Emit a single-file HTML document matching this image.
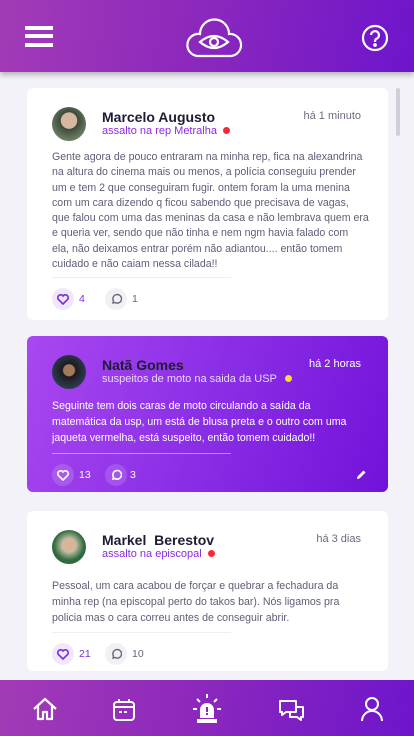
<!DOCTYPE html>
<html><head><meta charset="utf-8"><style>
*{margin:0;padding:0;box-sizing:border-box}
body{width:414px;height:736px;overflow:hidden;background:#f2f2f8;font-family:"Liberation Sans",sans-serif;position:relative}
.hdr{position:absolute;left:0;top:0;width:414px;height:72px;background:linear-gradient(100deg,#a33bb6,#8a27bd 50%,#6e15cc);box-shadow:0 3px 5px rgba(0,0,0,.25);z-index:2}
.nav{position:absolute;left:0;top:680px;width:414px;height:56px;background:linear-gradient(100deg,#a33bb6,#8a27bd 50%,#6e15cc)}
.card{position:absolute;left:27px;width:361px;background:#fff;border-radius:6px}
.av{position:absolute;left:25px;width:34px;height:34px;border-radius:50%}
.nm{position:absolute;left:75px;font-size:14px;font-weight:bold;color:#1e1b33}
.sub{position:absolute;left:75px;font-size:11px;color:#8a2be2}
.dot{display:inline-block;width:7px;height:7px;border-radius:50%;background:#f42a3a;margin-left:6px;vertical-align:0}
.tm{position:absolute;right:27px;font-size:11px;color:#6b6a80}
.bd{position:absolute;left:25px;width:340px;font-size:10.6px;line-height:15.3px;color:#5f5d78;white-space:nowrap}
.dv{position:absolute;left:25px;width:179px;height:1px;background:#eee}
.ic{position:absolute;width:22px;height:22px;border-radius:50%;display:flex;align-items:center;justify-content:center}
.cnt{position:absolute;font-size:10.5px}
.c2{background:linear-gradient(110deg,#a947f0,#8a2ee6 50%,#7212d9)}
.c2 .nm{color:#1e1b33}.c2 .sub{color:#ead9ff}.c2 .tm{color:#fff}.c2 .bd{color:#fff;line-height:16px}
</style></head><body>
<div class="hdr">
<div style="position:absolute;left:25px;top:26px;width:28px;height:4px;background:#fff"></div>
<div style="position:absolute;left:25px;top:34px;width:28px;height:4px;background:#fff"></div>
<div style="position:absolute;left:25px;top:43px;width:28px;height:4px;background:#fff"></div>
<svg style="position:absolute;left:185px;top:14px" width="58" height="44" viewBox="0 0 58 44" fill="none" stroke="#fff" stroke-width="2.2"><path d="M12 42 H46 A11 11 0 0 0 44 20 A14 14 0 0 0 15 20 A11 11 0 0 0 12 42 Z"/><path d="M15 28 Q29 16 43 28 Q29 40 15 28 Z"/><circle cx="29" cy="28" r="4"/></svg>
<svg style="position:absolute;left:361px;top:24px" width="28" height="28" viewBox="0 0 28 28" fill="none" stroke="#fff" stroke-width="2.2"><circle cx="14" cy="14" r="12"/><path d="M10 11 A4 4 0 1 1 15 15 Q14 16 14 18"/><circle cx="14" cy="21" r=".8" fill="#fff"/></svg>
</div>
<div style="position:absolute;left:396px;top:88px;width:4px;height:48px;border-radius:2px;background:#cfcfd8"></div>

<div class="card" style="top:88px;height:232px">
<div class="av" style="top:19px;background:radial-gradient(circle at 50% 40%,#d8b7a0 0 30%,#3b4a3a 32%,#6a7b62 70%)"></div>
<div class="nm" style="top:21px">Marcelo Augusto</div>
<div class="sub" style="top:37px">assalto na rep Metralha<span class="dot"></span></div>
<div class="tm" style="top:22px">há 1 minuto</div>
<div class="bd" style="top:62px">Gente agora de pouco entraram na minha rep, fica na alexandrina<br>na altura do cinema mais ou menos, a polícia conseguiu prender<br>um e tem 2 que conseguiram fugir. ontem foram la uma menina<br>com um cara dizendo q ficou sabendo que precisava de vagas,<br>que falou com uma das meninas da casa e não lembrava quem era<br>e queria ver, sendo que não tinha e nem ngm havia falado com<br>ela, não deixamos entrar porém não adiantou.... então tomem<br>cuidado e não caiam nessa cilada!!</div>
<div class="dv" style="top:189px"></div>
<div class="ic" style="left:25px;top:200px;background:#efe8fc"><svg width="12" height="11" viewBox="0 0 12 11"><path d="M6 10 L1.3 5.3 A2.7 2.7 0 0 1 6 2 A2.7 2.7 0 0 1 10.7 5.3 Z" fill="none" stroke="#7a2de0" stroke-width="1.6"/></svg></div>
<div class="cnt" style="left:52px;top:205px;color:#7a2de0">4</div>
<div class="ic" style="left:78px;top:200px;background:#f1f1f4"><svg width="12" height="12" viewBox="0 0 12 12"><path d="M3 10 L3.5 8 A4.3 4.3 0 1 1 5 9.5 Z" fill="none" stroke="#66657a" stroke-width="1.4"/></svg></div>
<div class="cnt" style="left:105px;top:205px;color:#66657a">1</div>
</div>

<div class="card c2" style="top:336px;height:156px">
<div class="av" style="top:19px;background:radial-gradient(circle at 50% 45%,#a37a5a 0 22%,#1c1a22 26%,#2d3c4c 70%)"></div>
<div class="nm" style="top:21px">Natã Gomes</div>
<div class="sub" style="top:37px">suspeitos de moto na saida da USP<span class="dot" style="background:#ffd83a;margin-left:8px"></span></div>
<div class="tm" style="top:22px">há 2 horas</div>
<div class="bd" style="top:62px">Seguinte tem dois caras de moto circulando a saída da<br>matemática da usp, um está de blusa preta e o outro com uma<br>jaqueta vermelha, está suspeito, então tomem cuidado!!</div>
<div class="dv" style="top:117px;background:rgba(255,255,255,.45)"></div>
<div class="ic" style="left:25px;top:128px;background:rgba(255,255,255,.15)"><svg width="12" height="11" viewBox="0 0 12 11"><path d="M6 10 L1.3 5.3 A2.7 2.7 0 0 1 6 2 A2.7 2.7 0 0 1 10.7 5.3 Z" fill="none" stroke="#fff" stroke-width="1.6"/></svg></div>
<div class="cnt" style="left:52px;top:133px;color:#fff">13</div>
<div class="ic" style="left:78px;top:128px;background:rgba(255,255,255,.15)"><svg width="12" height="12" viewBox="0 0 12 12"><path d="M3 10 L3.5 8 A4.3 4.3 0 1 1 5 9.5 Z" fill="none" stroke="#fff" stroke-width="1.6"/></svg></div>
<div class="cnt" style="left:103px;top:133px;color:#fff">3</div>
<svg style="position:absolute;left:329px;top:133px" width="11" height="11" viewBox="0 0 11 11"><path d="M1 10 L1.5 7.5 L7.5 1.5 L9.5 3.5 L3.5 9.5 Z" fill="#fff"/></svg>
</div>

<div class="card" style="top:511px;height:160px">
<div class="av" style="top:19px;background:radial-gradient(circle at 50% 45%,#d9b595 0 22%,#c9bfa8 26%,#2f6b3e 60%)"></div>
<div class="nm" style="top:21px">Markel&nbsp; Berestov</div>
<div class="sub" style="top:37px">assalto na episcopal<span class="dot"></span></div>
<div class="tm" style="top:22px">há 3 dias</div>
<div class="bd" style="top:67px;line-height:16px">Pessoal, um cara acabou de forçar e quebrar a fechadura da<br>minha rep (na episcopal perto do takos bar). Nós ligamos pra<br>policia mas o cara correu antes de conseguir abrir.</div>
<div class="dv" style="top:121px"></div>
<div class="ic" style="left:25px;top:132px;background:#efe8fc"><svg width="12" height="11" viewBox="0 0 12 11"><path d="M6 10 L1.3 5.3 A2.7 2.7 0 0 1 6 2 A2.7 2.7 0 0 1 10.7 5.3 Z" fill="none" stroke="#7a2de0" stroke-width="1.6"/></svg></div>
<div class="cnt" style="left:52px;top:137px;color:#7a2de0">21</div>
<div class="ic" style="left:78px;top:132px;background:#f1f1f4"><svg width="12" height="12" viewBox="0 0 12 12"><path d="M3 10 L3.5 8 A4.3 4.3 0 1 1 5 9.5 Z" fill="none" stroke="#66657a" stroke-width="1.4"/></svg></div>
<div class="cnt" style="left:105px;top:137px;color:#66657a">10</div>
</div>

<div class="nav">
<svg style="position:absolute;left:32px;top:16px" width="26" height="26" viewBox="0 0 26 26" fill="none" stroke="#fff" stroke-width="2.2" stroke-linejoin="round"><path d="M2 13 L13 3 L24 13 M6 10 V23 H11 V16 H15 V23 H20 V10"/></svg>
<svg style="position:absolute;left:112px;top:18px" width="24" height="24" viewBox="0 0 24 24" fill="none" stroke="#fff" stroke-width="2"><rect x="2" y="4" width="20" height="18" rx="3"/><path d="M7 1 V5 M17 1 V5 M2 9 H22"/><rect x="7" y="13" width="3" height="2" fill="#fff" stroke="none"/><rect x="12" y="13" width="3" height="2" fill="#fff" stroke="none"/></svg>
<svg style="position:absolute;left:192px;top:14px" width="30" height="30" viewBox="0 0 30 30" fill="#fff"><rect x="14" y="0" width="2" height="4"/><rect x="1" y="14" width="4" height="2"/><rect x="25" y="14" width="4" height="2"/><path d="M5 5 L8 8 M25 5 L22 8" stroke="#fff" stroke-width="2"/><path d="M8 24 V16 A7 7 0 0 1 22 16 V24 Z"/><rect x="5" y="25" width="20" height="4"/><rect x="14" y="13" width="2" height="5" fill="#8a27bd"/><rect x="14" y="19" width="2" height="2" fill="#8a27bd"/></svg>
<svg style="position:absolute;left:278px;top:18px" width="28" height="26" viewBox="0 0 28 26" fill="none" stroke="#fff" stroke-width="2" stroke-linejoin="round"><path d="M2 3 H18 V14 H8 L4 17 V14 H2 Z"/><path d="M18 9 H25 V19 H23 V22 L19 19 H12 V14"/></svg>
<svg style="position:absolute;left:360px;top:16px" width="24" height="26" viewBox="0 0 24 26" fill="none" stroke="#fff" stroke-width="2"><circle cx="12" cy="8" r="6"/><path d="M2 25 A10 10 0 0 1 22 25"/></svg>
</div>
</body></html>
